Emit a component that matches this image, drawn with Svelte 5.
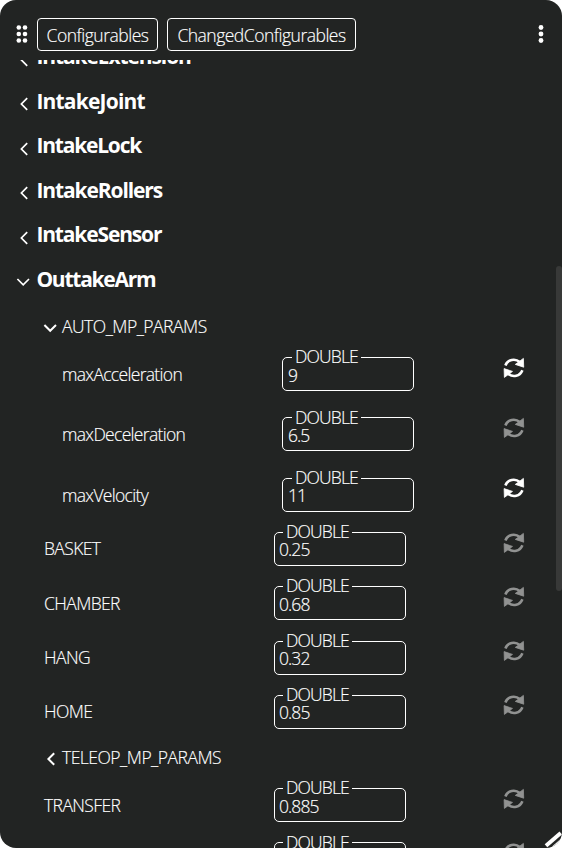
<script>
  const closed = [
    { name: 'IntakeExtension', tracking: -1.1 },
    { name: 'IntakeJoint', tracking: -0.8 },
    { name: 'IntakeLock', tracking: -1.2 },
    { name: 'IntakeRollers', tracking: -1.1 },
    { name: 'IntakeSensor', tracking: -1.15 }
  ];
  const opened = { name: 'OuttakeArm', tracking: -1.25 };
  const nested = [
    { name: 'maxAcceleration', value: '9', changed: true },
    { name: 'maxDeceleration', value: '6.5', changed: false },
    { name: 'maxVelocity', value: '11', changed: true }
  ];
  const fields = [
    { name: 'BASKET', value: '0.25' },
    { name: 'CHAMBER', value: '0.68' },
    { name: 'HANG', value: '0.32' },
    { name: 'HOME', value: '0.85' }
  ];
  const tail = [
    { name: 'TRANSFER', value: '0.885' },
    { name: '', value: '' }
  ];
</script>

{#snippet chevron(open)}
  <svg class="chev" viewBox="0 0 14 14">
    {#if open}
      <path d="M1.4 4 7.2 9.8 13 4" />
    {:else}
      <path d="M11.2 1.2 5.4 7 11.2 12.8" />
    {/if}
  </svg>
{/snippet}

{#snippet group(item, open)}
  <div class="group">
    {@render chevron(open)}
    <h2 style="letter-spacing: {item.tracking}px">{item.name}</h2>
  </div>
{/snippet}

{#snippet row(item)}
  <div class="row">
    <span class="name">{item.name}</span>
    <div class="field">
      <span class="legend">DOUBLE</span>
      <span class="value">{item.value}</span>
    </div>
    <svg class="sync" class:active={item.changed} viewBox="0 0 22 22">
      <path class="arc" d="M2.4 8.4C4.8 2.4 12 1 16.8 5M19.4 13.2C17 19.2 10 20.8 5.2 16.8" />
      <path class="head" d="M20.4 1.4 20.7 10.2 12.3 7.4ZM1.4 20.4 1.1 11.6 9.5 14.4Z" />
    </svg>
  </div>
{/snippet}

<div class="panel">
  <header>
    <svg class="grip" viewBox="0 0 12 18">
      {#each [2.5, 9, 15.5] as y}
        <circle cx="2.8" cy={y} r="2.3" /><circle cx="9" cy={y} r="2.3" />
      {/each}
    </svg>
    <button class="first">Configurables</button>
    <button class="second">ChangedConfigurables</button>
    <svg class="more" viewBox="0 0 6 18">
      {#each [2.5, 9, 15.5] as y}<circle cx="3" cy={y} r="2.4" />{/each}
    </svg>
  </header>
  <main>
    <div class="list">
      {#each closed as item}{@render group(item, false)}{/each}
      {@render group(opened, true)}
      <div class="sub auto">{@render chevron(true)}<span>AUTO_MP_PARAMS</span></div>
      <div class="nested">
        {#each nested as item}{@render row(item)}{/each}
      </div>
      <div class="outer">
        {#each fields as item}{@render row(item)}{/each}
      </div>
      <div class="sub teleop">{@render chevron(false)}<span>TELEOP_MP_PARAMS</span></div>
      <div class="outer">
        {#each tail as item}{@render row(item)}{/each}
      </div>
    </div>
    <div class="thumb"></div>
  </main>
  <svg class="resize" viewBox="0 0 18 18">
    <path d="M2 15.8 16.8 3" stroke-width="4" />
    <path d="M8.5 17 17 9.5" stroke-width="1.3" />
  </svg>
</div>

<style>
  :global(body) { background: #fff; }
  .panel {
    position: relative;
    width: 562px;
    height: 848px;
    display: flex;
    flex-direction: column;
    overflow: hidden;
    border-radius: 16px;
    background: #222423;
    color: #fff;
    font: 300 17.5px/18px 'Open Sans', 'Noto Sans', sans-serif;
    letter-spacing: -0.6px;
    white-space: nowrap;
    -webkit-text-stroke: 0.15px #fff;
  }
  svg { flex: none; fill: #fff; display: block; }
  header {
    box-sizing: border-box;
    flex: none;
    height: 60px;
    padding: 18px 18px 0 16px;
    display: flex;
    align-items: flex-start;
  }
  .grip { width: 12px; height: 18px; margin: 7px 9px 0 0; }
  .more { width: 6px; height: 18px; margin: 7px 0 0 auto; }
  button {
    box-sizing: border-box;
    height: 33px;
    padding: 1px 0 0;
    border: 1px solid #fff;
    border-radius: 4px;
    background: none;
    color: inherit;
    font: inherit;
    letter-spacing: -0.5px;
  }
  .first { width: 121px; margin-right: 9px; }
  .second { width: 189px; }
  main { position: relative; flex: 1; min-height: 0; overflow: hidden; }
  .list { margin-top: -26px; }
  .chev { width: 14px; height: 14px; fill: none; stroke: #fff; stroke-width: 1.7; }
  .group {
    height: 44.5px;
    padding-left: 16px;
    display: flex;
    align-items: center;
  }
  .group .chev { margin: 7px 6.4px 0 0; }
  h2 {
    margin: 0;
    font-size: 21px;
    font-weight: 700;
    line-height: 30px;
    -webkit-text-stroke: 0;
  }
  .sub { height: 24px; padding-left: 43px; display: flex; align-items: center; letter-spacing: -0.5px; }
  .sub .chev { margin: 3px 5px 0 0; stroke-width: 2; }
  .auto { margin: 13px 0 19px; }
  .teleop { margin: -4px 0 19px; }
  .row { display: flex; align-items: flex-start; height: 54.3px; padding-left: 44px; }
  .nested .row { height: 60.3px; padding-left: 62px; }
  .nested .row:last-child { height: 54.4px; }
  .name { width: 230px; padding-top: 7.4px; }
  .nested .name { width: 220px; padding-top: 8px; letter-spacing: -0.68px; }
  .field {
    position: relative;
    box-sizing: border-box;
    width: 132px;
    height: 34px;
    padding: 7.5px 0 0 4px;
    border: 1px solid #fff;
    border-radius: 5px;
  }
  .nested .field { padding-left: 5px; }
  .value { display: block; letter-spacing: -0.9px; }
  .legend {
    position: absolute;
    left: 8px;
    top: -10.8px;
    width: 69px;
    box-sizing: border-box;
    padding-left: 3px;
    background: #222423;
    letter-spacing: -0.85px;
  }
  .nested .legend { left: 9px; }
  .sync { width: 22px; height: 22px; margin: -0.4px 0 0 97px; opacity: 0.5; }
  .nested .sync { margin-left: 89px; }
  .sync.active { opacity: 1; }
  .arc { fill: none; stroke: #fff; stroke-width: 2.6; }
  .head { stroke: #fff; stroke-width: 0.8; stroke-linejoin: round; }
  .thumb {
    position: absolute;
    right: 0;
    top: 206px;
    width: 6px;
    height: 325px;
    border-radius: 3px;
    background: #383938;
  }
  .resize { position: absolute; right: 0; bottom: 0; width: 18px; height: 18px; stroke: #fff; }
</style>
